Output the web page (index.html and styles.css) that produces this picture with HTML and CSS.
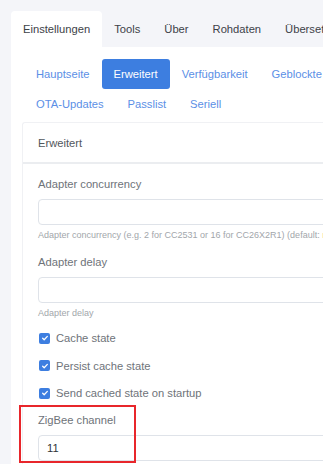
FILE: index.html
```html
<!DOCTYPE html>
<html lang="de">
<head>
    <meta charset="UTF-8">
    <meta name="viewport" content="width=device-width, initial-scale=1.0">
    <title>Einstellungen</title>
    <link rel="stylesheet" href="styles.css">
</head>
<body>

    <div class="app">
        <!-- Haupt-Tabs -->
        <ul class="tabs">
            <li class="tab active">Einstellungen</li>
            <li class="tab">Tools</li>
            <li class="tab">Über</li>
            <li class="tab">Rohdaten</li>
            <li class="tab">Übersetzen</li>
        </ul>

        <div class="panel">
            <!-- Unter-Navigation -->
            <ul class="subnav">
                <li class="pill">Hauptseite</li>
                <li class="pill active">Erweitert</li>
                <li class="pill">Verfügbarkeit</li>
                <li class="pill">Geblockte Geräte</li>
                <li class="pill">Frontend</li>
            </ul>
            <ul class="subnav">
                <li class="pill">OTA-Updates</li>
                <li class="pill">Passlist</li>
                <li class="pill">Seriell</li>
            </ul>

            <div class="card">
                <div class="card-header">Erweitert</div>
                <div class="card-body">
                    <div class="field">
                        <label>Adapter concurrency</label>
                        <input type="text" class="input">
                        <div class="help">Adapter concurrency (e.g. 2 for CC2531 or 16 for CC26X2R1) (default: <code>null</code>)</div>
                    </div>
                    <div class="field">
                        <label>Adapter delay</label>
                        <input type="text" class="input">
                        <div class="help">Adapter delay</div>
                    </div>

                    <div class="check-list">
                        <div class="check">
                            <span class="box">
                                <svg viewBox="0 0 12 12" width="8" height="8"><path d="M2.5 6.3l2.3 2.3 4.7-5" fill="none" stroke="#fff" stroke-width="1.9" stroke-linecap="round" stroke-linejoin="round"/></svg>
                            </span>
                            Cache state
                        </div>
                        <div class="check">
                            <span class="box">
                                <svg viewBox="0 0 12 12" width="8" height="8"><path d="M2.5 6.3l2.3 2.3 4.7-5" fill="none" stroke="#fff" stroke-width="1.9" stroke-linecap="round" stroke-linejoin="round"/></svg>
                            </span>
                            Persist cache state
                        </div>
                        <div class="check">
                            <span class="box">
                                <svg viewBox="0 0 12 12" width="8" height="8"><path d="M2.5 6.3l2.3 2.3 4.7-5" fill="none" stroke="#fff" stroke-width="1.9" stroke-linecap="round" stroke-linejoin="round"/></svg>
                            </span>
                            Send cached state on startup
                        </div>
                    </div>

                    <div class="field marked">
                        <label>ZigBee channel</label>
                        <input type="text" class="input" value="11">
                    </div>
                </div>
            </div>
        </div>
    </div>

</body>
</html>
```

FILE: styles.css
```css
* {
    margin: 0;
    padding: 0;
    box-sizing: border-box;
    font-family: "Liberation Sans", Arial, sans-serif;
}

body {
    background: #f4f5f9;
    overflow: hidden;
    height: 464px;
}

.app {
    width: 720px;
    padding: 11px 0 0 11px;
}

ul {
    list-style: none;
}

.tabs {
    display: flex;
}

.tab {
    height: 36px;
    line-height: 36px;
    padding: 0 12px;
    font-size: 11.2px;
    color: #3d4248;
}

.tab.active {
    background: #fff;
    border-radius: 4px 4px 0 0;
}

.panel {
    background: #fff;
    padding: 12px 0 20px 11px;
}

.subnav {
    display: flex;
    margin-left: 2px;
}

.pill {
    height: 30px;
    line-height: 30px;
    padding: 0 12px;
    font-size: 11.2px;
    color: #5b8fe6;
    border-radius: 3px;
    white-space: nowrap;
}

.pill.active {
    background: #3d7ee0;
    color: #fff;
}

.card {
    margin-top: 3px;
    border: 1px solid #f0f1f4;
    border-right: none;
    border-radius: 3px 0 0 3px;
}

.card-header {
    height: 41px;
    line-height: 41px;
    padding: 0 15px;
    font-size: 11.2px;
    color: #52575d;
    border-bottom: 2px solid #ebedf0;
}

.card-body {
    padding: 0 15px 20px;
}

.field {
    padding-top: 13px;
}

.field label {
    display: block;
    line-height: 14px;
    margin-bottom: 8px;
    font-size: 11.2px;
    color: #6e7379;
}

.input {
    display: block;
    width: 100%;
    height: 26px;
    padding: 0 8px;
    border: 1px solid #dfe3e9;
    border-radius: 4px;
    background: #fff;
    font-size: 11.2px;
    color: #2f3337;
}

.help {
    margin-top: 5px;
    line-height: 11px;
    font-size: 9px;
    color: #a2a6ab;
    white-space: nowrap;
}

.help code {
    font-family: "Liberation Mono", monospace;
    color: #e8733c;
}

.check-list {
    padding-top: 12px;
    display: flex;
    flex-direction: column;
    gap: 13.5px;
}

.check {
    display: flex;
    align-items: center;
    gap: 6px;
    height: 14px;
    font-size: 11.2px;
    color: #6e7379;
}

.box {
    display: flex;
    align-items: center;
    justify-content: center;
    width: 11px;
    height: 11px;
    margin-left: 1px;
    border-radius: 2px;
    background: #3d7ee0;
}

.field.marked {
    position: relative;
    padding-top: 13px;
}

/* rote Markierung */
.field.marked::after {
    content: "";
    position: absolute;
    left: -19px;
    top: 5px;
    width: 113px;
    height: 54px;
    border: 2px solid #e8262b;
}
```
